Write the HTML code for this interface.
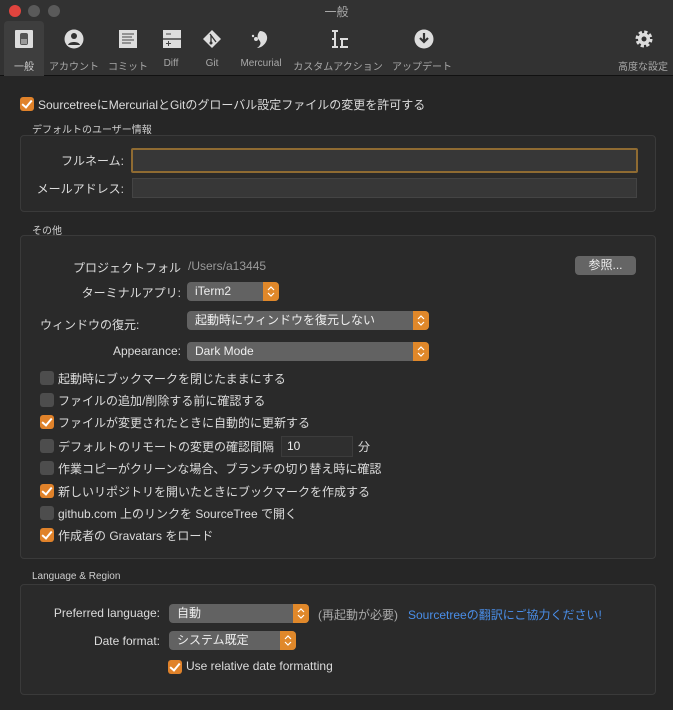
<!DOCTYPE html>
<html><head><meta charset="utf-8"><style>
*{margin:0;padding:0;box-sizing:border-box}
body{width:673px;height:710px;background:#262626;font-family:"Liberation Sans","Noto Sans CJK JP",sans-serif;color:#dcdcdc;position:relative;overflow:hidden;font-size:12px}
.a{position:absolute;white-space:nowrap}
.tb{position:absolute;left:0;top:0;width:673px;height:76px;background:#323232;border-bottom:1px solid #111}
.dot{position:absolute;top:5px;width:12px;height:12px;border-radius:50%;background:#5a5a5a}
.tl{position:absolute;top:58px;font-size:10px;color:#a8a8a8;text-align:center}
.ic{position:absolute;top:29px}
.box{position:absolute;border:1px solid #3a3a3a;background:#2a2a2a;border-radius:4px}
.gl{position:absolute;font-size:10px;color:#cfcfcf}
.fld{position:absolute;background:#373737;border:1px solid #444}
.pop{position:absolute;background:#626262;border-radius:4px;height:19px;color:#eee;padding-left:8px;line-height:19px;font-size:12px}
.pop::after{content:"";position:absolute;right:0;top:0;width:16px;height:19px;background:#e0882a;border-radius:0 4px 4px 0}
.pop svg{position:absolute;right:3px;top:3px;z-index:2}
.cb{position:absolute;width:14px;height:14px;border-radius:3px;background:#4d4d4d}
.cb.on{background:#e0822a}
.cb.on::after{content:"";position:absolute;left:4px;top:1px;width:4px;height:8px;border:solid #fff;border-width:0 2px 2px 0;transform:rotate(40deg)}
.r{text-align:right}
</style></head><body>
<div class="tb">
<div class="dot" style="left:9px;background:#e0443e"></div><div class="dot" style="left:28px"></div><div class="dot" style="left:48px"></div>
<div class="a" style="left:0;width:673px;top:3px;text-align:center;font-size:12px;color:#aaa">一般</div>
<div style="position:absolute;left:4px;top:21px;width:40px;height:55px;background:#3e3e3e;border-radius:4px 4px 0 0"></div>
<svg class="ic" style="left:14px" width="20" height="20"><rect x="1" y="1" width="18" height="18" rx="1" fill="#ddd"/><rect x="6" y="4" width="8" height="12" rx="2" fill="#555"/><rect x="7" y="10" width="6" height="5" fill="#999"/></svg>
<svg class="ic" style="left:64px" width="20" height="20"><circle cx="10" cy="10" r="9.5" fill="#ddd"/><circle cx="10" cy="7" r="3" fill="#323232"/><path d="M4 16c1-4 11-4 12 0" fill="#323232"/></svg>
<svg class="ic" style="left:118px" width="20" height="20"><rect x="1" y="1" width="18" height="18" fill="#ddd"/><path d="M4 5h12M4 8h10M4 11h12M4 14h9" stroke="#666" stroke-width="1.2"/></svg>
<svg class="ic" style="left:162px" width="20" height="20"><rect x="1" y="1" width="18" height="18" fill="#ddd"/><path d="M1 10h18" stroke="#444" stroke-width="1.5"/><path d="M4 5h5M4 14.5h5M6.5 12v5" stroke="#444"/></svg>
<svg class="ic" style="left:202px" width="20" height="20"><path d="M10 1L19 10 10 19 1 10z" fill="#ddd"/><path d="M8 5l6 8M9 6v8" stroke="#323232" stroke-width="1.3"/><circle cx="9" cy="14" r="1.5" fill="#323232"/></svg>
<svg class="ic" style="left:250px" width="22" height="20"><path d="M10 2c6 0 9 6 6 11s-7 6-9 6c3-2 5-5 2-8-2-2-2-6 1-9z" fill="#ddd"/><circle cx="6" cy="10" r="2" fill="#ddd"/><circle cx="3" cy="7" r="1.2" fill="#ddd"/></svg>
<svg class="ic" style="left:330px" width="20" height="20"><path d="M2 2h6M5 2v16M2 18h6M10 10h8M12 10v8M10 18h8M2 10h3" stroke="#ddd" stroke-width="2"/></svg>
<svg class="ic" style="left:414px" width="20" height="20"><circle cx="10" cy="10" r="9.5" fill="#ddd"/><path d="M10 4v8M6 9l4 4 4-4" stroke="#323232" stroke-width="2.2" fill="none"/></svg>
<svg class="ic" style="left:634px" width="20" height="20"><circle cx="10" cy="10" r="6.5" fill="none" stroke="#ddd" stroke-width="4" stroke-dasharray="3 2.1"/><circle cx="10" cy="10" r="6" fill="#ddd"/><circle cx="10" cy="10" r="2.5" fill="#323232"/></svg>
<div class="tl" style="left:4px;width:40px;color:#ccc">一般</div>
<div class="tl" style="left:46px;width:56px">アカウント</div>
<div class="tl" style="left:104px;width:48px">コミット</div>
<div class="tl" style="left:156px;width:30px">Diff</div>
<div class="tl" style="left:198px;width:28px">Git</div>
<div class="tl" style="left:234px;width:54px">Mercurial</div>
<div class="tl" style="left:290px;width:96px">カスタムアクション</div>
<div class="tl" style="left:390px;width:64px">アップデート</div>
<div class="tl" style="left:615px;width:56px">高度な設定</div>
</div>

<div class="cb on" style="left:20px;top:97px"></div>
<div class="a" style="left:38px;top:96px">SourcetreeにMercurialとGitのグローバル設定ファイルの変更を許可する</div>

<div class="gl" style="left:32px;top:121px">デフォルトのユーザー情報</div>
<div class="box" style="left:20px;top:135px;width:636px;height:77px"></div>
<div class="a r" style="left:30px;width:94px;top:152px">フルネーム:</div>
<div class="fld" style="left:131px;top:148px;width:507px;height:25px;border:2px solid #8f6b32;border-radius:2px"></div>
<div class="a r" style="left:30px;width:94px;top:180px">メールアドレス:</div>
<div class="fld" style="left:132px;top:178px;width:505px;height:20px"></div>

<div class="gl" style="left:32px;top:222px">その他</div>
<div class="box" style="left:20px;top:235px;width:636px;height:324px"></div>
<div class="a r" style="left:40px;width:141px;top:259px">プロジェクトフォル</div>
<div class="a" style="left:188px;top:259px;color:#9a9a9a">/Users/a13445</div>
<div class="a" style="left:575px;top:256px;width:61px;height:19px;background:#656565;border-radius:4px;text-align:center;line-height:19px;color:#eee">参照...</div>
<div class="a r" style="left:40px;width:141px;top:284px">ターミナルアプリ:</div>
<div class="pop" style="left:187px;top:282px;width:92px">iTerm2<svg width="10" height="13"><path d="M2 5l3-3 3 3M2 8l3 3 3-3" stroke="#fff" stroke-width="1.2" fill="none"/></svg></div>
<div class="a" style="left:40px;top:316px">ウィンドウの復元:</div>
<div class="pop" style="left:187px;top:311px;width:242px">起動時にウィンドウを復元しない<svg width="10" height="13"><path d="M2 5l3-3 3 3M2 8l3 3 3-3" stroke="#fff" stroke-width="1.2" fill="none"/></svg></div>
<div class="a r" style="left:40px;width:141px;top:344px">Appearance:</div>
<div class="pop" style="left:187px;top:342px;width:242px">Dark Mode<svg width="10" height="13"><path d="M2 5l3-3 3 3M2 8l3 3 3-3" stroke="#fff" stroke-width="1.2" fill="none"/></svg></div>

<div class="cb" style="left:40px;top:371px"></div><div class="a" style="left:58px;top:370px">起動時にブックマークを閉じたままにする</div>
<div class="cb" style="left:40px;top:393px"></div><div class="a" style="left:58px;top:392px">ファイルの追加/削除する前に確認する</div>
<div class="cb on" style="left:40px;top:415px"></div><div class="a" style="left:58px;top:414px">ファイルが変更されたときに自動的に更新する</div>
<div class="cb" style="left:40px;top:439px"></div><div class="a" style="left:58px;top:438px">デフォルトのリモートの変更の確認間隔</div>
<div class="fld" style="left:281px;top:436px;width:72px;height:21px;background:#2f2f2f;border-color:#3c3c3c;padding-left:5px;line-height:19px;color:#eee">10</div>
<div class="a" style="left:358px;top:438px">分</div>
<div class="cb" style="left:40px;top:461px"></div><div class="a" style="left:58px;top:460px">作業コピーがクリーンな場合、ブランチの切り替え時に確認</div>
<div class="cb on" style="left:40px;top:484px"></div><div class="a" style="left:58px;top:483px">新しいリポジトリを開いたときにブックマークを作成する</div>
<div class="cb" style="left:40px;top:506px"></div><div class="a" style="left:58px;top:505px">github.com 上のリンクを SourceTree で開く</div>
<div class="cb on" style="left:40px;top:528px"></div><div class="a" style="left:58px;top:527px">作成者の Gravatars をロード</div>

<div class="gl" style="left:32px;top:571px">Language &amp; Region</div>
<div class="box" style="left:20px;top:584px;width:636px;height:111px"></div>
<div class="a r" style="left:30px;width:130px;top:606px">Preferred language:</div>
<div class="pop" style="left:169px;top:604px;width:140px">自動<svg width="10" height="13"><path d="M2 5l3-3 3 3M2 8l3 3 3-3" stroke="#fff" stroke-width="1.2" fill="none"/></svg></div>
<div class="a" style="left:318px;top:606px;color:#aaa">(再起動が必要)</div>
<div class="a" style="left:408px;top:606px;color:#4a8ee8">Sourcetreeの翻訳にご協力ください!</div>
<div class="a r" style="left:30px;width:130px;top:634px">Date format:</div>
<div class="pop" style="left:169px;top:631px;width:127px">システム既定<svg width="10" height="13"><path d="M2 5l3-3 3 3M2 8l3 3 3-3" stroke="#fff" stroke-width="1.2" fill="none"/></svg></div>
<div class="cb on" style="left:168px;top:660px"></div>
<div class="a" style="left:186px;top:659px">Use relative date formatting</div>
</body></html>
